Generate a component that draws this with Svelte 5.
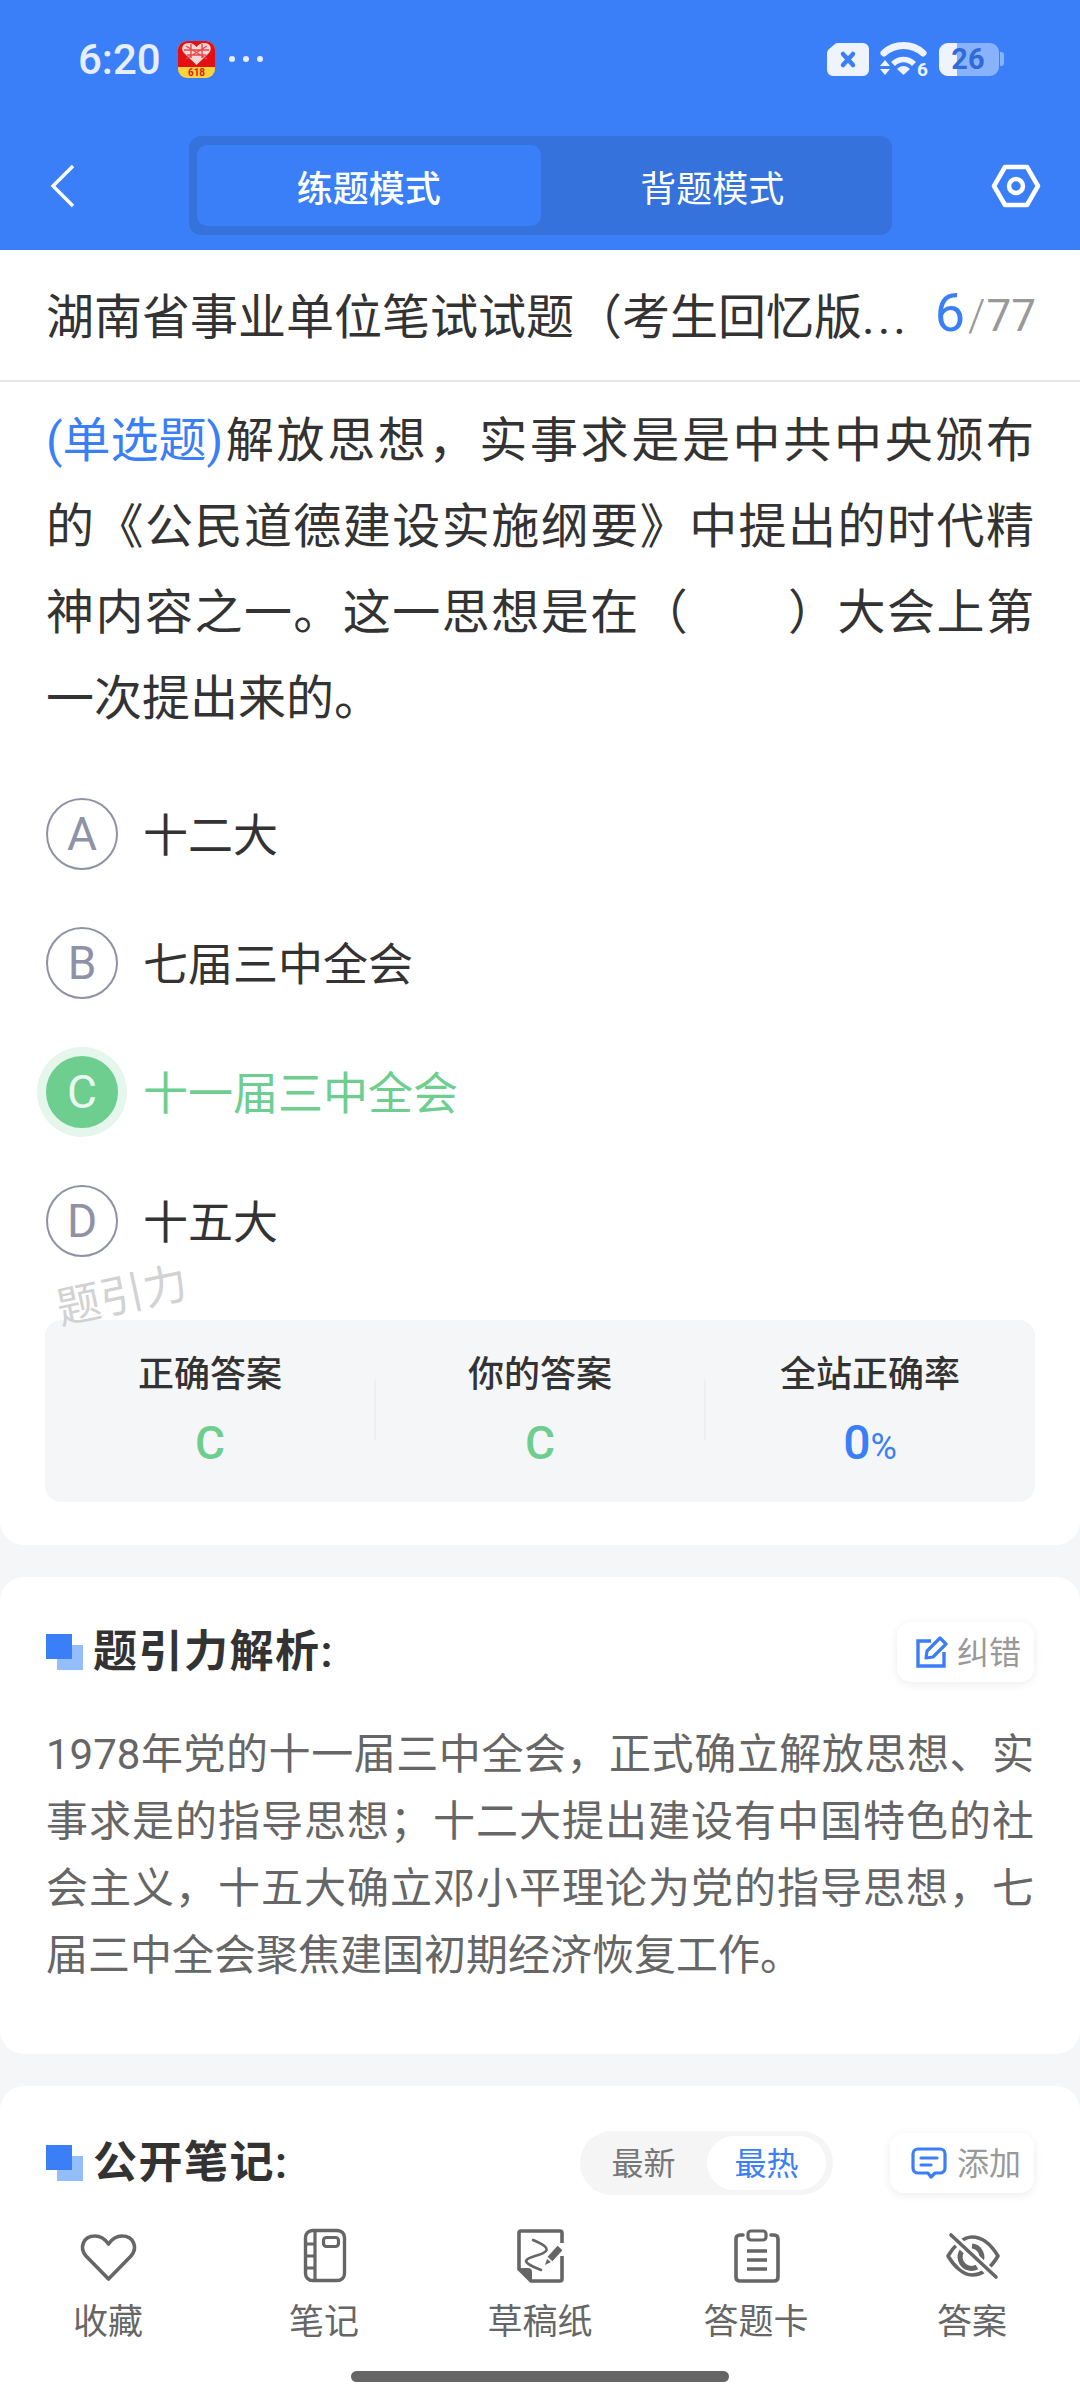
<script>
    const stats = [
        { label: "正确答案", value: "C" },
        { label: "你的答案", value: "C" },
    ];
    const options = [
        { key: "A", text: "十二大" },
        { key: "B", text: "七届三中全会" },
        { key: "C", text: "十一届三中全会", right: true },
        { key: "D", text: "十五大" },
    ];
</script>

<div class="page">
    <header class="header">
        <div class="status">
            <span class="time">6:20</span>
            <span class="app-icon">
                <svg viewBox="0 0 37 26" width="37" height="26">
                    <rect width="37" height="26" fill="#e40f12" />
                    <path d="M18.5 24 L6 12 C2 7 5 2 11 2 C14 2 17 4 18.5 6 C20 4 23 2 26 2 C32 2 35 7 31 12 Z" fill="#f6d9d6" />
                    <path d="M8 5 L29 18 M29 5 L8 18 M13 3 L13 17 M24 3 L24 17 M6 9 H31 M9 14 H28" stroke="#e8474a" stroke-width="1.4" />
                </svg>
                <span class="app-618">618</span>
            </span>
            <span class="dots"><i></i><i></i><i></i></span>
            <span class="status-right">
                <svg viewBox="0 0 42 33" width="42" height="33">
                    <path d="M11 0 H36 A6 6 0 0 1 42 6 V27 A6 6 0 0 1 36 33 H6 A6 6 0 0 1 0 27 V10 Q0 8 2 6 L8 1 Q9 0 11 0 Z" fill="#eef3fe" />
                    <path d="M16 11 L26 22 M26 11 L16 22" stroke="#3b7ff8" stroke-width="4.5" stroke-linecap="round" />
                </svg>
                <svg viewBox="0 0 48 34" width="48" height="34">
                    <path d="M4 11 C15 1 32 1 43 11" fill="none" stroke="#eef3fe" stroke-width="7" stroke-linecap="round" />
                    <path d="M11 20 C18 13 29 13 36 20 L32 24 C27 19 20 19 15 24 Z" fill="#eef3fe" />
                    <path d="M17 27 C21 23 26 23 30 27 L23.5 33 Z" fill="#eef3fe" />
                    <path d="M0 24 L5 18 L10 24 Z M0 27 L5 33 L10 27 Z" fill="#eef3fe" />
                    <text x="37" y="34" class="wifi-6">6</text>
                </svg>
                <span class="battery">
                    <span class="battery-body">
                        <span class="battery-fill"></span>
                        <span class="battery-num">26</span>
                    </span>
                    <span class="battery-nib"></span>
                </span>
            </span>
        </div>
        <div class="nav">
            <svg class="back" viewBox="0 0 26 44" width="26" height="44">
                <path d="M23 2 L3 22 L23 42" fill="none" stroke="#fff" stroke-width="3.4" />
            </svg>
            <div class="tabs">
                <div class="tab active">练题模式</div>
                <div class="tab">背题模式</div>
            </div>
            <svg class="hex" viewBox="0 0 50 44" width="50" height="44">
                <path d="M14 3 H36 L47 22 L36 41 H14 L3 22 Z" fill="none" stroke="#fff" stroke-width="4.5" stroke-linejoin="round" />
                <circle cx="25" cy="22" r="7" fill="none" stroke="#fff" stroke-width="4.5" />
            </svg>
        </div>
    </header>

    <div class="title-row">
        <span class="title">湖南省事业单位笔试试题（考生回忆版<span class="more">...</span></span>
        <span class="count"><b>6</b><i>/</i>77</span>
    </div>

    <main class="content">
        <section class="card question-card">
            <p class="question"><span class="qtype">(单选题)</span>解放思想，实事求是是中共中央颁布的《公民道德建设实施纲要》中提出的时代精神内容之一。这一思想是在（　　）大会上第一次提出来的。</p>

            <div class="options">
                {#each options as o}
                    <div class="option" class:right={o.right}>
                        <span class="letter">{o.key}</span>
                        <span class="option-text">{o.text}</span>
                    </div>
                {/each}
            </div>

            <div class="watermark">题引力</div>

            <div class="stats">
                {#each stats as s}
                    <div class="stat">
                        <div class="stat-label">{s.label}</div>
                        <div class="stat-value green">{s.value}</div>
                    </div>
                {/each}
                <div class="stat">
                    <div class="stat-label">全站正确率</div>
                    <div class="stat-value blue">0<small>%</small></div>
                </div>
            </div>
        </section>

        <section class="card analysis-card">
            <div class="sec-head">
                <h2 class="sec-title"><span class="mark"></span>题引力解析:</h2>
                <button class="mini-btn">
                    <svg viewBox="0 0 32 32" width="32" height="32">
                        <path d="M15 5 H2 V30 H28 V16" fill="none" stroke="#3b7ff8" stroke-width="3.4" />
                        <path d="M10 22 L11 15 L24 2 L30 8 L17 21 Z" fill="none" stroke="#3b7ff8" stroke-width="3.2" stroke-linejoin="round" />
                    </svg>
                    <span class="btn-text">纠错</span>
                </button>
            </div>
            <p class="analysis">1978年党的十一届三中全会，正式确立解放思想、实事求是的指导思想；十二大提出建设有中国特色的社会主义，十五大确立邓小平理论为党的指导思想，七届三中全会聚焦建国初期经济恢复工作。</p>
        </section>

        <section class="card notes-card">
            <div class="sec-head">
                <h2 class="sec-title"><span class="mark"></span>公开笔记:</h2>
                <div class="sec-tools">
                    <div class="toggle">
                        <span class="toggle-item">最新</span>
                        <span class="toggle-item on">最热</span>
                    </div>
                    <button class="mini-btn add">
                        <svg viewBox="0 0 36 32" width="36" height="32">
                            <path d="M7 2 H29 A5 5 0 0 1 34 7 V21 A5 5 0 0 1 29 26 H24 L20 30 L17 26 H7 A5 5 0 0 1 2 21 V7 A5 5 0 0 1 7 2 Z" fill="none" stroke="#3b7ff8" stroke-width="3.2" stroke-linejoin="round" />
                            <path d="M10 11 H26 M10 18 H20" stroke="#3b7ff8" stroke-width="3.2" stroke-linecap="round" />
                        </svg>
                        <span class="btn-text">添加</span>
                    </button>
                </div>
            </div>
        </section>
    </main>

    <nav class="bottom">
        <div class="bottom-items">
            <div class="item">
                <svg viewBox="0 0 72 60" width="72" height="60">
                    <path d="M36.5 53 L14 30 C7 22 11 10 23 10 C29 10 33 13 36.5 18 C40 13 44 10 50 10 C62 10 66 22 59 30 Z" fill="none" stroke="#666" stroke-width="3.6" stroke-linejoin="round" />
                </svg>
                <span>收藏</span>
            </div>
            <div class="item">
                <svg viewBox="0 0 72 60" width="72" height="60">
                    <rect x="17.5" y="4.5" width="39" height="50" rx="7" fill="none" stroke="#666" stroke-width="3.4" />
                    <path d="M27 5 V54 M18 18 H27 M18 30 H27 M18 42 H27" fill="none" stroke="#666" stroke-width="3.2" />
                    <rect x="35.5" y="11.5" width="15" height="9" rx="3" fill="none" stroke="#666" stroke-width="3.2" />
                </svg>
                <span>笔记</span>
            </div>
            <div class="item">
                <svg viewBox="0 0 72 60" width="72" height="60">
                    <path d="M58 17 V7 Q58 5 56 5 H17 Q15 5 15 7 V43 L27 55 H56 Q58 55 58 53 V30" fill="none" stroke="#666" stroke-width="3.6" />
                    <path d="M15 43 H24 Q27 43 27 46 V55 Z" fill="#666" stroke="#666" stroke-width="2" stroke-linejoin="round" />
                    <path d="M29 14 C36 17 45 21 42 25 C38 30 24 30 22 35 C22 38 30 41 37 44" fill="none" stroke="#666" stroke-width="2.6" stroke-linecap="round" />
                    <path d="M46 33 L56 22" stroke="#666" stroke-width="6.5" />
                    <path d="M41 39 L43 33 L47 36 Z" fill="#666" />
                </svg>
                <span>草稿纸</span>
            </div>
            <div class="item">
                <svg viewBox="0 0 72 60" width="72" height="60">
                    <path d="M23 9 H20 Q16 9 16 13 V51 Q16 55 20 55 H54 Q58 55 58 51 V13 Q58 9 54 9 H51" fill="none" stroke="#666" stroke-width="3.6" stroke-linecap="round" />
                    <rect x="28" y="5" width="18" height="9" rx="3" fill="none" stroke="#666" stroke-width="3.2" />
                    <path d="M27 25 H47 M27 34 H47 M27 43 H47" stroke="#666" stroke-width="3.6" />
                </svg>
                <span>答题卡</span>
            </div>
            <div class="item">
                <svg viewBox="0 0 72 60" width="72" height="60">
                    <path d="M12 30 C18 20 27 11 36 11 C47 11 56 20 62 30 C56 40 47 49 36 49 C27 49 18 40 12 30 Z" fill="none" stroke="#666" stroke-width="3.6" stroke-linejoin="round" />
                    <path d="M30 21 A11 11 0 0 0 41 41 M44 37 A11 11 0 0 0 36 20" fill="none" stroke="#666" stroke-width="5" />
                    <path d="M14 8 L60 52" stroke="#fff" stroke-width="9" />
                    <path d="M15 9 L60 51" stroke="#666" stroke-width="3.6" stroke-linecap="round" />
                </svg>
                <span>答案</span>
            </div>
        </div>
        <div class="home-bar"></div>
    </nav>
</div>

<style>
    :global(body) {
        margin: 0;
        background: #fff;
    }

    .page {
        width: 1080px;
        height: 2400px;
        display: flex;
        flex-direction: column;
        overflow: hidden;
        background: #f5f6f8;
        color: #333;
        font-family: Roboto, "Noto Sans CJK SC", sans-serif;
    }

    /* top blue bar */
    .header {
        height: 250px;
        flex-shrink: 0;
        background: #3b7ff8;
        color: #fff;
    }

    .status {
        height: 118px;
        display: flex;
        align-items: center;
        padding: 0 76px 0 78px;
        box-sizing: border-box;
    }

    .time {
        font-size: 42px;
        font-weight: 500;
        color: #e6eefe;
        width: 100px;
    }

    .app-icon {
        width: 37px;
        height: 37px;
        border-radius: 9px;
        overflow: hidden;
        background: #fbd43a;
        display: flex;
        flex-direction: column;
        align-items: center;
    }

    .app-icon svg {
        display: block;
        flex-shrink: 0;
    }

    .app-618 {
        font-size: 10px;
        line-height: 11px;
        font-weight: 700;
        color: #d8191c;
    }

    .dots {
        display: flex;
        gap: 8px;
        margin-left: 14px;
    }

    .dots i {
        width: 6px;
        height: 6px;
        border-radius: 50%;
        background: #e6eefe;
    }

    .status-right {
        margin-left: auto;
        display: flex;
        align-items: center;
        gap: 11px;
    }

    .wifi-6 {
        font-size: 19px;
        font-weight: 700;
        fill: #eef3fe;
    }

    .battery {
        display: flex;
        align-items: center;
        gap: 1px;
    }

    .battery-body {
        position: relative;
        width: 60px;
        height: 33px;
        border-radius: 9px;
        background: #88b2fb;
        overflow: hidden;
        display: flex;
        align-items: center;
        justify-content: center;
    }

    .battery-nib {
        width: 4px;
        height: 14px;
        border-radius: 0 3px 3px 0;
        background: #88b2fb;
    }

    .battery-fill {
        position: absolute;
        left: 0;
        top: 0;
        bottom: 0;
        width: 18px;
        background: #eef3fe;
    }

    .battery-num {
        position: relative;
        font-size: 29px;
        font-weight: 700;
        color: #2f6bd6;
        margin-right: 2px;
    }

    .nav {
        display: flex;
        align-items: center;
        padding: 18px 39px 0 50px;
    }

    .back {
        flex-shrink: 0;
    }

    .tabs {
        margin-left: 113px;
        width: 703px;
        height: 99px;
        box-sizing: border-box;
        padding: 9px 8px;
        border-radius: 12px;
        background: #3672dc;
        display: flex;
    }

    .tab {
        flex: 1;
        display: flex;
        align-items: center;
        justify-content: center;
        font-size: 36px;
        border-radius: 10px;
    }

    .tab.active {
        background: #3b7ff8;
        font-weight: 500;
    }

    .hex {
        margin-left: auto;
    }

    /* paper title */
    .title-row {
        height: 132px;
        flex-shrink: 0;
        box-sizing: border-box;
        background: #fff;
        border-bottom: 2px solid #e5e5e5;
        display: flex;
        align-items: center;
        justify-content: space-between;
        padding: 0 44px 5px 46px;
    }

    .title {
        font-size: 48px;
        white-space: nowrap;
    }

    .more {
        letter-spacing: 3px;
    }

    .count {
        font-size: 44px;
        color: #999;
    }

    .count b {
        font-size: 54px;
        font-weight: 400;
        color: #3b7ff8;
    }

    .count i {
        font-style: normal;
        font-weight: 300;
        margin: 0 1px 0 3px;
    }

    .content {
        flex: 1;
        min-height: 0;
        overflow: hidden;
        display: flex;
        flex-direction: column;
        gap: 32px;
    }

    .card {
        flex-shrink: 0;
        background: #fff;
        border-radius: 24px;
        padding: 45px 46px 65px;
    }

    .question-card {
        position: relative;
        border-radius: 0 0 24px 24px;
        padding: 16px 45px 43px;
    }

    .question {
        margin: 0 1px;
        font-size: 48px;
        line-height: 86px;
        text-align: justify;
    }

    .qtype {
        display: inline-block;
        color: #3b7ff8;
    }

    .options {
        margin-top: 56px;
        display: flex;
        flex-direction: column;
        gap: 57px;
    }

    .option {
        height: 72px;
        padding-left: 1px;
        display: flex;
        align-items: center;
        gap: 25px;
        font-size: 45px;
    }

    .option-text {
        padding-bottom: 3px;
    }

    .letter {
        width: 72px;
        height: 72px;
        box-sizing: border-box;
        border: 2px solid #8f92a6;
        border-radius: 50%;
        color: #8f92a6;
        font-size: 46px;
        font-weight: 400;
        display: flex;
        align-items: center;
        justify-content: center;
    }

    .option.right {
        color: #6dce8f;
    }

    .option.right .letter {
        border-color: #6dce8f;
        background: #6dce8f;
        color: #e9f9ef;
        box-shadow: 0 0 0 9px #e5f6ec;
    }

    .watermark {
        position: absolute;
        left: 56px;
        top: 889px;
        font-size: 44px;
        line-height: 50px;
        color: #d2d2d2;
        transform: rotate(-12deg);
    }

    .stats {
        margin-top: 63px;
        height: 182px;
        box-sizing: border-box;
        padding: 28px 0 0;
        border-radius: 16px;
        background: #f5f6f8;
        display: grid;
        grid-template-columns: repeat(3, 1fr);
    }

    .stat {
        text-align: center;
        position: relative;
    }

    .stat + .stat::before {
        content: "";
        position: absolute;
        left: -1px;
        top: 32px;
        height: 60px;
        width: 2px;
        background: #eceef1;
    }

    .stat-label {
        font-size: 36px;
        line-height: 54px;
        font-weight: 500;
    }

    .stat-value {
        margin-top: 14px;
        font-size: 46px;
        line-height: 54px;
        font-weight: 500;
    }

    .stat-value.blue {
        font-size: 48px;
    }

    .stat-value small {
        font-size: 36px;
        font-weight: 400;
    }

    .green {
        color: #6dce8f;
    }

    .blue {
        color: #3b7ff8;
    }

    /* section head */
    .sec-head {
        display: flex;
        align-items: center;
        justify-content: space-between;
        min-height: 60px;
    }

    .sec-title {
        margin: 0;
        display: flex;
        align-items: center;
        gap: 10px;
        font-size: 44px;
        line-height: 60px;
        font-weight: 600;
        letter-spacing: 1.5px;
    }

    .mark {
        position: relative;
        width: 37px;
        height: 36px;
    }

    .mark::before,
    .mark::after {
        content: "";
        position: absolute;
        width: 26px;
        height: 25px;
    }

    .mark::after {
        left: 0;
        top: 0;
        background: #3b7ff8;
    }

    .mark::before {
        right: 0;
        bottom: 0;
        background: #93bdfb;
    }

    .mini-btn {
        width: 137px;
        height: 60px;
        padding: 0 13px 0 0;
        border: 0;
        border-radius: 14px;
        background: #fff;
        box-shadow: 0 2px 10px rgba(0, 0, 0, 0.08);
        display: flex;
        align-items: center;
        justify-content: flex-end;
        gap: 9px;
        font-family: inherit;
        font-size: 32px;
        color: #999;
    }

    .mini-btn.add {
        width: 144px;
        gap: 10px;
    }

    .btn-text {
        padding-bottom: 5px;
    }

    .analysis {
        margin: 39px 0 0;
        font-size: 42px;
        line-height: 67px;
        color: #666;
        text-align: justify;
    }

    .notes-card {
        padding-bottom: 40px;
    }

    .sec-tools {
        display: flex;
        align-items: center;
        gap: 57px;
    }

    .toggle {
        width: 253px;
        height: 64px;
        box-sizing: border-box;
        padding: 5px 7px 5px 0;
        border-radius: 32px;
        background: #f5f5f5;
        display: flex;
    }

    .toggle-item {
        width: 127px;
        flex-shrink: 0;
        padding-bottom: 4px;
        box-sizing: border-box;
        display: flex;
        align-items: center;
        justify-content: center;
        font-size: 32px;
        color: #777;
        border-radius: 27px;
    }

    .toggle-item.on {
        width: 119px;
        background: #fff;
        color: #3b7ff8;
    }

    /* bottom toolbar */
    .bottom {
        height: 190px;
        flex-shrink: 0;
        box-sizing: border-box;
        background: #fff;
        padding-top: 16px;
    }

    .bottom-items {
        display: grid;
        grid-template-columns: repeat(5, 216px);
    }

    .item {
        display: flex;
        flex-direction: column;
        align-items: center;
        font-size: 35px;
        line-height: 46px;
        color: #666;
    }

    .item span {
        margin-top: 14px;
    }

    .home-bar {
        width: 378px;
        height: 11px;
        margin: 25px auto 0;
        border-radius: 6px;
        background: #666;
    }
</style>
